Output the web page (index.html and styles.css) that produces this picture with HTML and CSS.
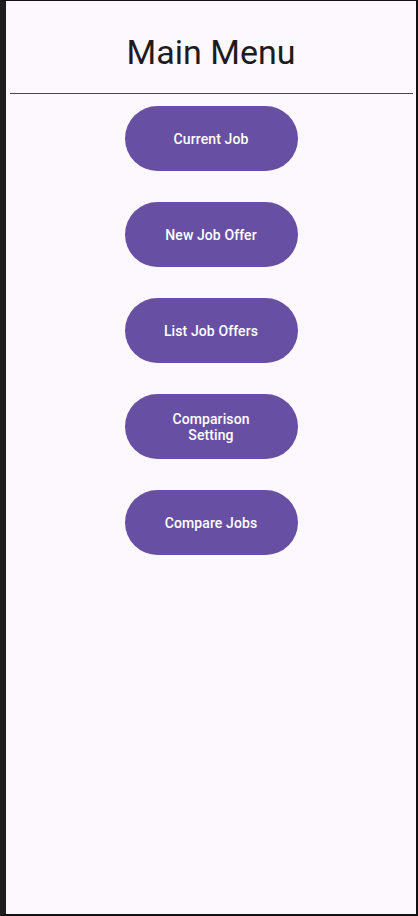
FILE: index.html
```html
<!DOCTYPE html>
<html>
<head>
<meta charset="utf-8">
<link rel="stylesheet" href="styles.css">
</head>
<body>
<div class="frame">
  <h1 class="title">Main Menu</h1>
  <hr class="divider">
  <div class="menu">
    <button class="btn">Current Job</button>
    <button class="btn">New Job Offer</button>
    <button class="btn">List Job Offers</button>
    <button class="btn">Comparison<br>Setting</button>
    <button class="btn">Compare Jobs</button>
  </div>
</div>
</body>
</html>
```
FILE: styles.css
```css
html, body {
  margin: 0;
  padding: 0;
  background: #1c1c1c;
  height: 100%;
}
.frame {
  box-sizing: border-box;
  height: 916px;
  border-left: 6px solid #1e1e1e;
  border-top: 1px solid #111;
  border-right: 2px solid #111;
  border-bottom: 2px solid #111;
  background: #fdf7fe;
  display: flex;
  flex-direction: column;
  align-items: center;
  font-family: Roboto, "Noto Sans", sans-serif;
}
.title {
  margin: 31px 0 0;
  font-size: 34px;
  font-weight: 400;
  line-height: 41px;
  color: #1d1b20;
  letter-spacing: 0;
}
.divider {
  align-self: stretch;
  margin: 20px 3px 0 4px;
  border: 0;
  height: 1px;
  background: #49454f;
}
.menu {
  margin-top: 12px;
  display: flex;
  flex-direction: column;
  gap: 31px;
}
.btn {
  width: 173px;
  height: 65px;
  border: 0;
  border-radius: 33px;
  background: #6750a4;
  color: #ffffff;
  font-family: Roboto, "Noto Sans", sans-serif;
  font-size: 14px;
  font-weight: 500;
  line-height: 16px;
  letter-spacing: 0.1px;
  padding: 0 16px;
  text-align: center;
}
```
